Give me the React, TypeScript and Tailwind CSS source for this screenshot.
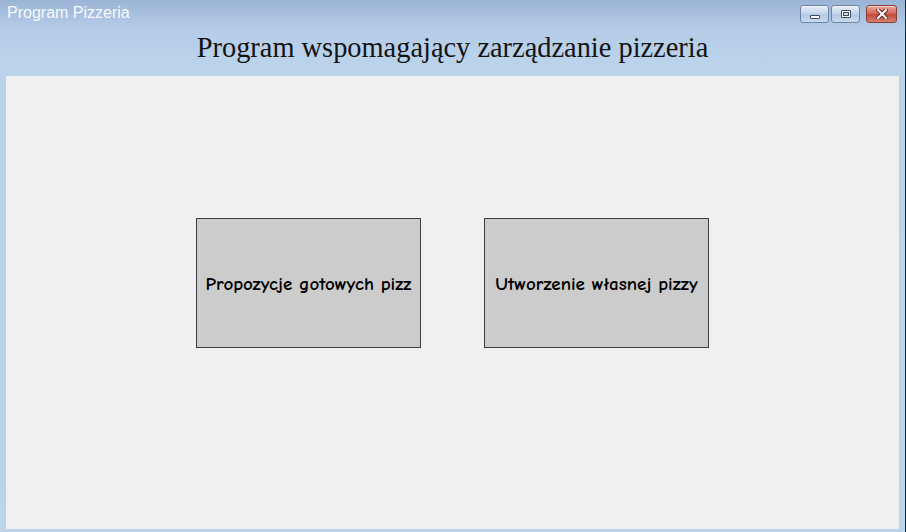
import React from "react";

const WinButton: React.FC<{ kind: "min" | "max" | "close" }> = ({ kind }) => {
  const base =
    "h-[18px] rounded-[3px] border flex items-center justify-center shadow-[inset_0_1px_0_rgba(255,255,255,0.6)]";
  if (kind === "close") {
    return (
      <div className={`${base} w-[31px] border-[#8a3b33] bg-[linear-gradient(#e8a89c,#d4695a_45%,#c44a3a_55%,#d3816f)]`}>
        <svg width="12" height="10" viewBox="0 0 12 10">
          <path d="M2 1 L10 9 M10 1 L2 9" stroke="#5a2a24" strokeWidth="4" strokeLinecap="square" />
          <path d="M2 1 L10 9 M10 1 L2 9" stroke="#ffffff" strokeWidth="2" strokeLinecap="square" />
        </svg>
      </div>
    );
  }
  return (
    <div className={`${base} w-[29px] border-[#6f84a3] bg-[linear-gradient(#e4edf8,#c7d7ec_45%,#b3c8e3_55%,#c9daef)]`}>
      {kind === "min" ? (
        <div className="mt-[6px] w-[10px] h-[4px] bg-white border border-[#3c4a60] rounded-[1px]" />
      ) : (
        <div className="w-[10px] h-[8px] border border-[#3c4a60] bg-white flex items-center justify-center rounded-[1px]">
          <div className="w-[6px] h-[4px] border border-[#3c4a60] bg-[#cfdcec]" />
        </div>
      )}
    </div>
  );
};

const BigButton: React.FC<{ label: string }> = ({ label }) => (
  <button
    type="button"
    className="w-[225px] h-[130px] bg-[#cccccc] border border-[#3d3d3d] flex items-center justify-center text-black text-[19px] font-bold pt-[2px] whitespace-nowrap"
    style={{ fontFamily: '"Comic Sans MS", "Comic Neue", "DejaVu Sans", sans-serif' }}
  >
    {label}
  </button>
);

export default function App() {
  return (
    <div className="w-[906px] h-[532px] flex flex-col bg-[linear-gradient(#9ab4d5,#b5cce8_28px,#bad2ea_60px,#bad2ea_118px,#bcd3ec_100%)] border-r border-r-[#0b2c44] overflow-hidden">
      {/* title bar */}
      <div className="h-[28px] flex items-start justify-between pl-[7px] pr-[8px] pt-[5px]">
        <span
          className="text-[16px] leading-[18px] text-[#f6f9fd] -mt-[1px]"
          style={{ fontFamily: '"Liberation Sans", Arial, sans-serif' }}
        >
          Program Pizzeria
        </span>
        <div className="flex gap-[2px]">
          <WinButton kind="min" />
          <WinButton kind="max" />
          <div className="w-[2px]" />
          <WinButton kind="close" />
        </div>
      </div>

      {/* heading */}
      <div className="h-[48px] flex items-center justify-center pb-[8px]">
        <h1
          className="text-[28.4px] leading-[32px] text-[#141414]"
          style={{ fontFamily: '"Liberation Serif", "Times New Roman", serif' }}
        >
          Program wspomagający zarządzanie pizzeria
        </h1>
      </div>

      {/* client panel */}
      <div className="flex-1 mx-[6px] mb-[3px] bg-[#f0f0f0] flex items-start justify-center gap-[63px] pt-[142px]">
        <BigButton label="Propozycje gotowych pizz" />
        <BigButton label="Utworzenie własnej pizzy" />
      </div>
    </div>
  );
}
